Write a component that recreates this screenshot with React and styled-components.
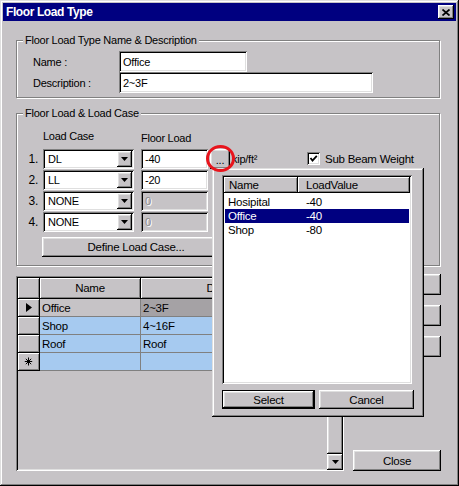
import React from 'react';
import styled, { createGlobalStyle } from 'styled-components';

const FACE = '#c6c3c6';
const NAVY = '#000080';
const GRIDLINE = '#808080';

const raised = `box-shadow: inset -1px -1px #000, inset 1px 1px #fff, inset -2px -2px #808080, inset 2px 2px #dfdfdf;`;
const sunken = `box-shadow: inset 1px 1px #808080, inset -1px -1px #fff, inset 2px 2px #000, inset -2px -2px #dfdfdf;`;
const thinRaised = `box-shadow: inset 1px 1px #fff, inset -1px -1px #808080;`;

const Global = createGlobalStyle`
  html, body { margin: 0; padding: 0; background: ${FACE}; }
  body {
    font-family: "Liberation Sans", Arial, sans-serif;
    font-size: 11px;
    letter-spacing: -0.25px;
    color: #000;
  }
  * { box-sizing: border-box; }
`;

const Window = styled.div`
  position: relative;
  width: 459px;
  height: 486px;
  background: ${FACE};
  padding: 3px;
  box-shadow: inset -1px -1px #000, inset 1px 1px #dfdfdf, inset -2px -2px #808080, inset 2px 2px #fff;
  display: flex;
  flex-direction: column;
  overflow: hidden;
`;

const TitleBar = styled.div`
  height: 18px;
  background: ${NAVY};
  display: flex;
  align-items: center;
  justify-content: space-between;
  padding: 0 2px 0 3px;
`;

const Title = styled.span`
  color: #fff;
  font-weight: bold;
  font-size: 12px;
  letter-spacing: -0.4px;
`;

const CloseBox = styled.div`
  width: 16px;
  height: 14px;
  background: ${FACE};
  ${raised}
  display: flex;
  align-items: center;
  justify-content: center;
`;

const Body = styled.div`
  padding: 0 0 0 13px;
  display: flex;
  flex-direction: column;
`;

const Group = styled.div`
  width: 424px;
  margin-top: ${p => p.$mt}px;
  padding-bottom: ${p => p.$pb}px;
  border: 1px solid #808080;
  box-shadow: inset 1px 1px #fff, 1px 1px #fff;
`;

const GroupLabel = styled.div`
  width: fit-content;
  margin: -7px 0 0 6px;
  padding: 0 2px;
  height: 13px;
  line-height: 13px;
  background: ${FACE};
  white-space: nowrap;
`;

const NameForm = styled.div`
  margin-top: 4px;
  padding-left: 16px;
  display: grid;
  grid-template-columns: 86px auto;
  grid-auto-rows: 21px;
  align-items: center;
`;

const FieldLabel = styled.span`
  white-space: nowrap;
`;

const Field = styled.div`
  width: ${p => p.$w}px;
  height: ${p => p.$h || 21}px;
  background: ${p => (p.$disabled ? FACE : '#fff')};
  color: ${p => (p.$disabled ? '#8c8a8c' : '#000')};
  text-shadow: ${p => (p.$disabled ? '1px 1px #fff' : 'none')};
  ${sunken}
  padding: 0 4px;
  display: flex;
  align-items: center;
  white-space: nowrap;
`;

const COLS = '16px 98px 69px 22px 75px auto';

const LoadTable = styled.div`
  margin-top: 10px;
  padding-left: 10px;
  display: flex;
  flex-direction: column;
`;

const LoadHeader = styled.div`
  display: grid;
  grid-template-columns: ${COLS};
  height: 13px;
  line-height: 13px;
`;

const ColHead = styled.span`
  grid-column: ${p => p.$col};
  padding-top: ${p => p.$pt || 0}px;
  white-space: nowrap;
`;

const LoadRows = styled.div`
  margin-top: 6px;
  display: flex;
  flex-direction: column;
  gap: 1px;
`;

const LoadRow = styled.div`
  display: grid;
  grid-template-columns: ${COLS};
  height: 20px;
  align-items: center;
`;

const RowNum = styled.span`
  text-align: right;
  padding-right: 5px;
  font-size: 12px;
`;

const Combo = styled.div`
  width: 91px;
  height: 20px;
  background: #fff;
  ${sunken}
  padding: 2px;
  display: flex;
  align-items: center;
`;

const ComboText = styled.span`
  flex: 1;
  padding-left: 3px;
`;

const DropButton = styled.div`
  width: 15px;
  height: 16px;
  background: ${FACE};
  ${raised}
  display: flex;
  align-items: center;
  justify-content: center;
`;

const DotsButton = styled.div`
  width: 20px;
  height: 20px;
  background: ${FACE};
  ${raised}
  display: flex;
  align-items: center;
  justify-content: center;
  padding-top: 2px;
`;

const Unit = styled.span`
  white-space: nowrap;
`;

const CheckRow = styled.div`
  display: flex;
  align-items: center;
  gap: 5px;
  white-space: nowrap;
  margin-top: -1px;
  font-size: 11.5px;
`;

const CheckBox = styled.span`
  width: 13px;
  height: 13px;
  background: #fff;
  ${sunken}
  display: flex;
  align-items: center;
  justify-content: center;
`;

const DefineWrap = styled.div`
  margin-top: 5px;
  padding-left: 25px;
`;

const Button = styled.div`
  width: ${p => p.$w}px;
  height: ${p => p.$h}px;
  margin-top: ${p => p.$mt || 0};
  background: ${FACE};
  ${raised}
  border: ${p => (p.$default ? '1px solid #000' : 'none')};
  display: flex;
  align-items: center;
  justify-content: center;
  white-space: nowrap;
  font-size: 11.5px;
`;

const MainRow = styled.div`
  margin-top: 10px;
  display: flex;
  height: 195px;
`;

const DataGrid = styled.div`
  width: 328px;
  height: 195px;
  background: ${FACE};
  ${sunken}
  padding: 2px 1px 1px 2px;
  display: flex;
`;

const GridTable = styled.div`
  flex: 1;
  display: flex;
  flex-direction: column;
`;

const GridHead = styled.div`
  display: grid;
  grid-template-columns: 22px 101px 1fr;
  height: 21px;
`;

const HeadCell = styled.div`
  background: ${FACE};
  ${thinRaised}
  border-right: ${p => (p.$last ? 'none' : '1px solid #000')};
  border-bottom: 1px solid #000;
  display: flex;
  align-items: center;
  justify-content: center;
  font-size: 11.5px;
`;

const GridRow = styled.div`
  display: grid;
  grid-template-columns: 22px 101px 1fr;
  height: 18px;
`;

const RowHead = styled.div`
  background: ${FACE};
  ${thinRaised}
  border-right: 1px solid #000;
  border-bottom: 1px solid #000;
  display: flex;
  align-items: center;
  justify-content: center;
`;

const Cell = styled.div`
  background: ${p => p.$bg};
  border-right: ${p => (p.$last ? 'none' : `1px solid ${GRIDLINE}`)};
  border-bottom: 1px solid ${GRIDLINE};
  padding-left: 2px;
  display: flex;
  align-items: center;
  white-space: nowrap;
  font-size: 11.5px;
`;

const Scrollbar = styled.div`
  width: 16px;
  display: flex;
  flex-direction: column;
`;

const ScrollButton = styled.div`
  height: 16px;
  background: ${FACE};
  ${raised}
  display: flex;
  align-items: center;
  justify-content: center;
`;

const ScrollThumb = styled.div`
  flex: 1;
  background: ${FACE};
  ${raised}
`;

const ButtonColumn = styled.div`
  margin-left: 9px;
  width: 88px;
  display: flex;
  flex-direction: column;
  gap: 10px;
`;

const Popup = styled.div`
  position: absolute;
  left: 212px;
  top: 168px;
  width: 212px;
  height: 249px;
  background: ${FACE};
  box-shadow: inset -1px -1px #000, inset 1px 1px #dfdfdf, inset -2px -2px #808080, inset 2px 2px #fff;
  padding: 7px 0 0 10px;
  display: flex;
  flex-direction: column;
  z-index: 2;
`;

const ListBox = styled.div`
  width: 190px;
  height: 209px;
  background: #fff;
  ${sunken}
  padding: 2px;
  display: flex;
  flex-direction: column;
`;

const ListHead = styled.div`
  display: grid;
  grid-template-columns: 74px 1fr;
  height: 16px;
`;

const ListHeadCell = styled.div`
  background: ${FACE};
  ${thinRaised}
  border-right: 1px solid #000;
  border-bottom: 1px solid #000;
  padding-left: ${p => p.$pl}px;
  display: flex;
  align-items: center;
  font-size: 11.5px;
`;

const ListRows = styled.div`
  margin-top: 2px;
  display: flex;
  flex-direction: column;
`;

const ListRow = styled.div`
  display: grid;
  grid-template-columns: 78px 1fr;
  height: 14px;
  margin: 0 1px;
  background: ${p => (p.$sel ? NAVY : 'transparent')};
  color: ${p => (p.$sel ? '#fff' : '#000')};
`;

const ListCell = styled.span`
  padding-left: 3px;
  line-height: 14px;
  font-size: 11.5px;
  white-space: nowrap;
`;

const PopupButtons = styled.div`
  margin-top: 6px;
  display: flex;
  gap: 4px;
`;

const Annotation = styled.div`
  position: absolute;
  left: 206px;
  top: 145px;
  width: 29px;
  height: 27px;
  border: 3px solid #e8141c;
  border-radius: 50%;
  z-index: 3;
`;

const Arrow = () => (
  <svg width="7" height="4" viewBox="0 0 7 4">
    <polygon points="0,0 7,0 3.5,4" fill="#000" />
  </svg>
);

const loadRows = [
  { n: '1.', c: 'DL', v: '-40' },
  { n: '2.', c: 'LL', v: '-20' },
  { n: '3.', c: 'NONE', v: '0', dis: true },
  { n: '4.', c: 'NONE', v: '0', dis: true },
];

const gridRows = [
  { name: 'Office', desc: '2~3F', nameBg: FACE, descBg: '#a5a2a5', current: true },
  { name: 'Shop', desc: '4~16F', nameBg: '#a6caf0', descBg: '#a6caf0' },
  { name: 'Roof', desc: 'Roof', nameBg: '#a6caf0', descBg: '#a6caf0' },
  { name: '', desc: '', nameBg: '#a6caf0', descBg: '#a6caf0', isNew: true },
];

const listRows = [
  { name: 'Hosipital', value: '-40' },
  { name: 'Office', value: '-40', sel: true },
  { name: 'Shop', value: '-80' },
];

export default function App() {
  return (
    <>
      <Global />
      <Window>
        <TitleBar>
          <Title>Floor Load Type</Title>
          <CloseBox>
            <svg width="8" height="7" viewBox="0 0 8 7">
              <path d="M0.5 0.5 L7.5 6.5 M7.5 0.5 L0.5 6.5" stroke="#000" strokeWidth="1.7" />
            </svg>
          </CloseBox>
        </TitleBar>
        <Body>
          <Group $mt={19} $pb={4}>
            <GroupLabel>Floor Load Type Name &amp; Description</GroupLabel>
            <NameForm>
              <FieldLabel>Name :</FieldLabel>
              <Field $w={128}>Office</Field>
              <FieldLabel>Description :</FieldLabel>
              <Field $w={254}>2~3F</Field>
            </NameForm>
          </Group>

          <Group $mt={15} $pb={8}>
            <GroupLabel>Floor Load &amp; Load Case</GroupLabel>
            <LoadTable>
              <LoadHeader>
                <ColHead $col={2}>Load Case</ColHead>
                <ColHead $col={3} $pt={2}>Floor Load</ColHead>
              </LoadHeader>
              <LoadRows>
                {loadRows.map((r, i) => (
                  <LoadRow key={r.n}>
                    <RowNum>{r.n}</RowNum>
                    <Combo>
                      <ComboText>{r.c}</ComboText>
                      <DropButton><Arrow /></DropButton>
                    </Combo>
                    <Field $w={67} $h={20} $disabled={r.dis}>{r.v}</Field>
                    {i === 0 && (
                      <>
                        <DotsButton>...</DotsButton>
                        <Unit>kip/ft²</Unit>
                        <CheckRow>
                          <CheckBox>
                            <svg width="9" height="9" viewBox="0 0 9 9">
                              <path d="M1.5 4 L3.5 6.5 L7.8 1.8" stroke="#000" strokeWidth="1.8" fill="none" />
                            </svg>
                          </CheckBox>
                          Sub Beam Weight
                        </CheckRow>
                      </>
                    )}
                  </LoadRow>
                ))}
              </LoadRows>
            </LoadTable>
            <DefineWrap>
              <Button $w={188} $h={20}>Define Load Case...</Button>
            </DefineWrap>
          </Group>

          <MainRow>
            <DataGrid>
              <GridTable>
                <GridHead>
                  <HeadCell />
                  <HeadCell>Name</HeadCell>
                  <HeadCell $last>Description</HeadCell>
                </GridHead>
                {gridRows.map((r, i) => (
                  <GridRow key={i}>
                    <RowHead>
                      {r.current && (
                        <svg width="6" height="9" viewBox="0 0 6 9">
                          <polygon points="0,0 6,4.5 0,9" fill="#000" />
                        </svg>
                      )}
                      {r.isNew && (
                        <svg width="9" height="9" viewBox="0 0 9 9">
                          <path d="M4.5 0.5 V8.5 M0.8 4.5 H8.2 M1.8 1.8 L7.2 7.2 M7.2 1.8 L1.8 7.2" stroke="#000" strokeWidth="1" />
                        </svg>
                      )}
                    </RowHead>
                    <Cell $bg={r.nameBg}>{r.name}</Cell>
                    <Cell $bg={r.descBg} $last>{r.desc}</Cell>
                  </GridRow>
                ))}
              </GridTable>
              <Scrollbar>
                <ScrollButton>
                  <svg width="7" height="4" viewBox="0 0 7 4">
                    <polygon points="0,4 7,4 3.5,0" fill="#000" />
                  </svg>
                </ScrollButton>
                <ScrollThumb />
                <ScrollButton><Arrow /></ScrollButton>
              </Scrollbar>
            </DataGrid>
            <ButtonColumn>
              <Button $w={88} $h={21} $mt="-2px">Add</Button>
              <Button $w={88} $h={21}>Modify</Button>
              <Button $w={88} $h={21}>Delete</Button>
              <Button $w={88} $h={21} $mt="auto">Close</Button>
            </ButtonColumn>
          </MainRow>
        </Body>

        <Popup>
          <ListBox>
            <ListHead>
              <ListHeadCell $pl={5}>Name</ListHeadCell>
              <ListHeadCell $pl={8}>LoadValue</ListHeadCell>
            </ListHead>
            <ListRows>
              {listRows.map(r => (
                <ListRow key={r.name} $sel={r.sel}>
                  <ListCell>{r.name}</ListCell>
                  <ListCell>{r.value}</ListCell>
                </ListRow>
              ))}
            </ListRows>
          </ListBox>
          <PopupButtons>
            <Button $w={93} $h={19} $default>Select</Button>
            <Button $w={95} $h={19}>Cancel</Button>
          </PopupButtons>
        </Popup>
        <Annotation />
      </Window>
    </>
  );
}
